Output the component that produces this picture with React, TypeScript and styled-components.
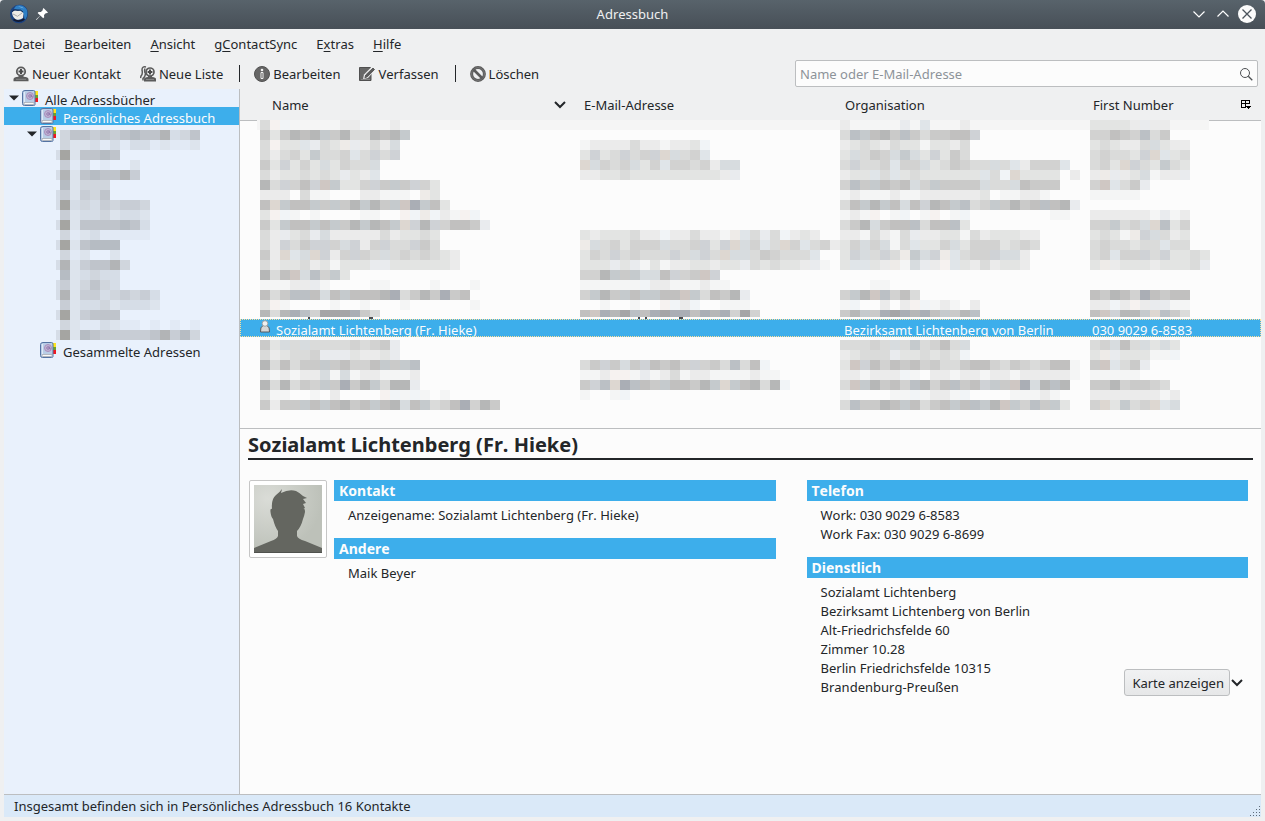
import React from "react";
import styled, { createGlobalStyle } from "styled-components";

const colors = {
  chrome: "#eff0f1",
  view: "#fcfcfc",
  text: "#232629",
  accent: "#3daeeb",
  line: "#bcbec0",
  tree: "#e9f1fc",
};

const GlobalStyle = createGlobalStyle`
  * { box-sizing: border-box; }
  body {
    margin: 0;
    background: ${colors.chrome};
    color: ${colors.text};
    font: 13px/18px "Noto Sans", "Open Sans", sans-serif;
    font-kerning: none;
  }
  button, input { font: inherit; font-kerning: none; color: inherit; }
  button { margin: 0; padding: 0; border: 0; background: none; }
  svg { display: block; flex: none; }
`;

const Window = styled.div`
  display: flex;
  flex-direction: column;
  min-height: 100vh;
  padding-bottom: 4px;
`;

const TitleBar = styled.header`
  display: grid;
  grid-template-columns: 1fr auto 1fr;
  align-items: center;
  height: 29px;
  padding: 0 9px 1px;
  border-radius: 4px 4px 0 0;
  background: linear-gradient(#58636b, #474f57);
  color: ${colors.chrome};
`;

const Title = styled.h1`
  margin: 0;
  font-size: 13px;
  font-weight: 400;
`;

const TitleGroup = styled.div<{ $end?: boolean; $gap: number }>`
  display: flex;
  align-items: center;
  justify-content: ${(p) => (p.$end ? "flex-end" : "flex-start")};
  gap: ${(p) => p.$gap}px;
`;

const WindowButton = styled.button`
  display: flex;
  justify-content: center;
  width: 18px;
`;

const MenuBar = styled.nav`
  display: flex;
  align-items: center;
  gap: 19px;
  height: 31px;
  padding: 0 13px 1px;
`;

const MenuItem = styled.button`
  u { text-underline-offset: 2px; }
`;

const ToolBar = styled.div`
  display: flex;
  align-items: center;
  height: 29px;
  padding: 0 7px 2px 13px;
`;

const Tool = styled.button`
  display: flex;
  align-items: center;
  gap: 3px;
  margin-right: 19px;
  white-space: nowrap;
`;

const Separator = styled.span`
  width: 1px;
  height: 17px;
  margin: 0 14px 0 -3px;
  background: ${colors.text};
`;

const Search = styled.label`
  display: flex;
  align-items: center;
  width: 463px;
  height: 27px;
  margin-left: auto;
  padding: 0 4px;
  border: 1px solid ${colors.line};
  border-radius: 2px;
  background: ${colors.view};
  input {
    flex: 1;
    min-width: 0;
    padding: 0;
    border: 0;
    outline: 0;
    background: none;
  }
  input::placeholder { color: #8d9399; opacity: 1; }
`;

const Body = styled.div`
  display: flex;
  flex: 1;
  margin: 0 4px;
`;

const Tree = styled.aside`
  width: 236px;
  flex: none;
  border-right: 1px solid ${colors.line};
  background: ${colors.tree};
`;

const TreeRow = styled.div<{ $level: number; $selected?: boolean }>`
  display: flex;
  align-items: flex-start;
  min-height: 18px;
  padding-left: ${(p) => 4 + p.$level * 18}px;
  background: ${(p) => (p.$selected ? colors.accent : "transparent")};
  color: ${(p) => (p.$selected ? colors.view : colors.text)};
`;

const Twisty = styled.span`
  display: flex;
  align-items: center;
  width: 14px;
  height: 18px;
  padding-left: 1px;
`;

const TreeLabel = styled.span`
  height: 18px;
  padding-left: 7px;
  line-height: 22px;
`;

const TreeMosaic = styled.div`
  padding: 5px 0 1px;
`;

const Main = styled.main`
  display: flex;
  flex-direction: column;
  flex: 1;
  min-width: 0;
  background: ${colors.view};
`;

const TablePane = styled.section`
  position: relative;
  border-bottom: 1px solid ${colors.line};
  &::before {
    content: "";
    position: absolute;
    top: 31px;
    left: 0;
    right: 0;
    border-top: 1px solid ${colors.line};
  }
  &::after {
    content: "";
    position: absolute;
    top: 31px;
    left: 17px;
    right: 52px;
    height: 10px;
    background: #f5f5f5;
  }
`;

const Table = styled.table`
  position: relative;
  z-index: 1;
  width: 100%;
  table-layout: fixed;
  border-collapse: collapse;
`;

const Col = styled.col<{ $width?: number }>`
  width: ${(p) => (p.$width ? p.$width + "px" : "auto")};
`;

const HeadCell = styled.th<{ $indent: number; $end?: number }>`
  height: 31px;
  padding: 0 ${(p) => p.$end ?? 0}px 0 ${(p) => p.$indent}px;
  background: ${colors.chrome};
  font-weight: 400;
  text-align: left;
`;

const HeadContent = styled.div`
  display: flex;
  align-items: center;
  justify-content: space-between;
`;

const MosaicCell = styled.td<{ $indent?: number; $height: number; $top?: number }>`
  height: ${(p) => p.$height}px;
  padding: ${(p) => p.$top ?? 0}px 0 0 ${(p) => p.$indent ?? 0}px;
  vertical-align: top;
`;

const SelectedRow = styled.tr`
  background: ${colors.accent};
  color: ${colors.view};
  outline: 1px dotted #ffdf98;
  outline-offset: -1px;
`;

const DataCell = styled.td<{ $indent: number }>`
  height: 18px;
  padding: 0 0 0 ${(p) => p.$indent}px;
`;

const CellText = styled.div`
  display: flex;
  align-items: flex-start;
  gap: 5px;
  height: 18px;
  line-height: 22px;
  white-space: nowrap;
`;

const Details = styled.section`
  padding: 0 8px;
`;

const ContactName = styled.h2`
  height: 31px;
  margin: 0 0 20px;
  border-bottom: 2px solid ${colors.text};
  font-size: 20px;
  line-height: 32px;
`;

const Card = styled.div`
  display: flex;
  align-items: flex-start;
  padding: 0 5px 0 1px;
`;

const Photo = styled.div`
  margin-right: 7px;
  padding: 4px;
  border: 1px solid #c6c6c6;
  border-radius: 2px;
  background: #fff;
`;

const Columns = styled.div`
  display: grid;
  flex: 1;
  grid-template-columns: 1fr 1fr;
  align-items: start;
  gap: 31px;
`;

const Block = styled.section`
  margin-bottom: 13px;
`;

const BlockTitle = styled.h3`
  height: 21px;
  margin: 0 0 5px;
  padding-left: 5px;
  background: ${colors.accent};
  color: ${colors.view};
  font-size: 14px;
  line-height: 21px;
`;

const BlockBody = styled.div`
  display: flex;
  align-items: flex-end;
  justify-content: space-between;
  padding: 0 5px 0 14px;
`;

const Lines = styled.div`
  line-height: 19px;
`;

const MapActions = styled.div`
  display: flex;
  align-items: center;
  gap: 1px;
  padding-bottom: 1px;
`;

const MapButton = styled.button`
  height: 27px;
  padding: 0 5px 0 7px;
  border: 1px solid ${colors.line};
  border-radius: 3px;
  background: linear-gradient(#f1f2f3, #e6e7e8);
  white-space: nowrap;
`;

const StatusBar = styled.footer`
  display: flex;
  align-items: center;
  justify-content: space-between;
  height: 23px;
  margin: 0 4px;
  padding-left: 10px;
  border-top: 1px solid ${colors.line};
  background: #dae9f8;
  svg { align-self: flex-end; }
`;

/* Pixelated entries: one letter per 10px block, light to dark;
   capitals are the cool tints, digits the warm ones. */
const greys: Record<string, string> = {
  a: "#f4f5f5", b: "#ebebeb", c: "#e3e4e3", d: "#dadbda", e: "#d2d2d1",
  f: "#cacac9", g: "#c1c0bf", h: "#b6b7b7", i: "#a5a5a6",
  A: "#f1f4f7", B: "#e9ebee", C: "#e0e5e9", D: "#d7dcdf", E: "#cfd2d6",
  F: "#c5cacd", G: "#bbc0c5", H: "#aaaeb5",
  "1": "#f6f2f0", "2": "#eeebe8", "3": "#ddd7d1", "4": "#cfc7c3",
};

const blues: Record<string, string> = {
  a: "#e2eaf5", b: "#dde4ed", c: "#d6dde7", d: "#d0d6dd", e: "#c8cdd5",
  f: "#bfc4cb", g: "#b6bcc3", h: "#b2b4b6", i: "#a5a5a2",
};

type MosaicProps = {
  rows: string[];
  height: number;
  palette?: Record<string, string>;
  left?: number;
  lastRow?: number;
  specks?: number[];
};

function Mosaic({ rows, height, palette = greys, left = 0, lastRow = 10, specks = [] }: MosaicProps) {
  const width = Math.max(...rows.map((r) => r.length)) * 10 - left;
  return (
    <svg width={width} height={height} viewBox={`${left} 0 ${width} ${height}`} shapeRendering="crispEdges" aria-hidden="true">
      {rows.map((row, y) =>
        [...row].map((c, x) =>
          palette[c] ? (
            <rect key={`${x}-${y}`} x={x * 10} y={y * 10} width="10" height={y === rows.length - 1 ? lastRow : 10} fill={palette[c]} />
          ) : null
        )
      )}
      {specks.map((x) => (
        <rect key={x} x={x} y="197" width="2" height="2" fill="#4b4d52" />
      ))}
    </svg>
  );
}

const nameTop = [
  "d1Aa...abbA..b", "fcfhghFfhddhghF", "d1ccCBdc2BbdbD", "dbdecFddeCdEdE", "fcEcecDceddD",
  "dbccdcdcBcbC", "hdEegE4FcceEfFfEec", "bbb.daa...bbaaa.2c", "g3FggFfFfhFhfF4HFgc", "c1Aa.a....aa..1A2Aba1A.",
  "fcFggFgFfhFhgF3EhEeggfB", "dbBcdBDbbbbbdbccdc", "dbEdfEEeDEbeEddEfd", "fb3CD3EbeEedDdededcb", "dbccdbcacccBBccccccb",
  "hdg4DGeFc", "aaabbBa....aa....a...a", "gdfGGgDgFggghHdfhfHfg", "c1a....a..a...a......a", "hdhHGeiiiHfd",
];
const nameBottom = [
  "fcDdDddddedefB", "dbcddeBBBcbbcB", "hdgdffFfgeegFfFG", "bababbDaDabbaaab", "hdhdfeFfHfhFdhhB",
  "caa..a.b....1AaAa.a", "fbffFgFghfgFghDgFdegHehf",
];
const mailTop = [
  "", "", "abbbbdbbabbcA", "cEcdEdeE3DdeC", "3DedeDceCeedebDD", "bbccdcccccccccbB", "", "", "", "", "",
  "cbcccdbbAbbdbba2CdBdAbcb", "2DdeceeeDddeEcE3DeCd3eCdeb", "cedEdedddEdDEd3DDdfedddC", "cccBcBacabbccbccBdcdccbBa",
  "eehFfFDDgEef4E", "aaaaaaAbbaaabaa", "eFhfFgFFgg4FdgfhB", "..a..a..1AbA..aaa", "g4HhiGgHiHHgHhHeie",
];
const mailBottom = ["", "", "dfEfDfEgfgeEefdGdgA", "aab11aBabdabbaaaabaa", "fEG3HGgfFggfhF3FghdhA", "a..aA"];
const orgTop = [
  "b.aaa.BaC...b", "dGFghfGfdffggE", "bcdcbdccaccbd", "cDdfeDFDcEcfd", "dEddeCeeDcdfeddDdCbeeeC", "bccCdCcdccccccCdA3cccc.b",
  "eGfFgfgDeFffffDddDgfff", "abaaabaabbbbbbc.aabba", "dgFhFgDgEhgFGdeFfhfgGghB", "aba1.aA.a1.aA........aa", "dfhDfggGdggGc", "bbadbadBbbccadbcccbb",
  "ceDeDadCcceDceeecded", "cEDdEd2FDE2CdeeEDDb", "cCCcb2aDBb1Ccbdbccb", "", "...aa", "eFh4Gegd", "aA..b.b1Aaba.b", "fhFfHiHhHgFfhG",
];
const orgBottom = [
  "dddedDdFdegdD", "bcdddBccdcdcA", "c4Egegfgefddfggedfedegga", "bbabbbAa.bbabbabbabbbbba", "d4FhfgeGhegGfgEFf4HDhGh",
  "a....aaAabbaA....aaaba", "dGffhgFgdfgFgGFh4FeGfFc",
];
const phoneTop = [
  "ccccbBbb", "eegfeGdf", "cdcbbdDcbb", "deddcE3Ccd", "dec3EdcFdc", "b2BbcDabbB", "e4CdfB", "aaaaa", "", "bbbbbbaBab",
  "eeFdeD3Gce", "cdca2EDdbc", "deddcddCdd", "deCeeEdEccdc", "c2bcccbcccdB", "", "", "gfhgeHgfgg", "bbAb1bBBaa", "g4EhhF3Gfd",
];
const phoneBottom = ["deDgdDcDc", "c2BcccaaA", "f4CdfB", "aaaaa", "ffheffed", "bbbbbbbab", "e3cFde3CD"];
const treeRows = [
  ".dffefefgffhcdf", ".dbbcacaccabaab", "cibffgf", ".eac.a..b", "chbfgffhe", ".gbddd", "cebedf", "cicdcedeed", ".ebccdbccb",
  "cibffffgfc", ".dabcaaaaa", "cibfggg", ".dab..b", "chbeffhd", ".gbcdcc", "cebdfdc", "chbeecdedec", ".ebccdbcccb", "cibefff",
  ".dbaacbaa.a.a.a", "cibgfeeeeefhegd",
];

const BookIcon = () => (
  <svg width="16" height="18" viewBox="0 0 16 18" aria-hidden="true">
    <rect x="12" y="2" width="4" height="4" fill="#ffe51c" />
    <rect x="12" y="6" width="4" height="3" fill="#6fa02c" />
    <rect x="12" y="9" width="4" height="4" fill="#f01820" />
    <path d="M3 1.500h8.500q1.500 0 1.500 1.500v12.500q0 1-1.500 1H2.500q-2 0-2-2V3.500q0-2 2.500-2z" fill="#b9cde6" stroke="#5473a3" />
    <path d="M2.500 3v10" stroke="#dfe9f7" />
    <path d="M2 13.500h10v2H3q-1.500 0-1-2z" fill="#fafafa" stroke="#a9adb4" strokeWidth=".8" />
    <circle cx="8" cy="7" r="3.500" fill="#bfb4d3" stroke="#a788b8" strokeWidth=".9" />
    <circle cx="8" cy="7" r="1.300" fill="none" stroke="#8b6ca6" strokeWidth=".8" />
    <path d="M9.300 5.500v2q.8 1.200 1.700 0" fill="none" stroke="#8b6ca6" strokeWidth=".8" />
  </svg>
);

const TwistyIcon = () => (
  <svg width="10" height="6" viewBox="0 0 10 6" aria-hidden="true"><path d="M0 .5h10L5 5.500z" fill="#232629" /></svg>
);

const ThunderbirdIcon = () => (
  <svg width="20" height="20" viewBox="0 0 20 20" aria-hidden="true">
    <path d="M10 .8c5-.8 9 3.200 9 8.700s-3.500 9.500-8 9.700C5 20 1 15 1 9q0-3 2-5 3-3.200 7-3.200z" fill="#1d4380" />
    <path d="M8 1.500q7-1.500 10 4.500 1.500 7-3 10.500 1-6-2-8.500-5-3-8-2 0-3 3-4.500z" fill="#2f7fc4" />
    <path d="M9 2.500q4-.5 6 2-3-1-6-2z" fill="#79b8e8" />
    <path d="M3 8.500Q5.500 5.500 9 7q4-1 5.500 2.500l-.5 4.500q-3 2.500-7 1.500-3.500-2-4-7z" fill="#eeebe7" />
    <path d="M4 10l4.500 2.300L13 9" fill="none" stroke="#9b9ca0" strokeWidth=".8" />
    <path d="M3 7.500q2-3 5-1.500 4-.8 6 2" fill="none" stroke="#14284e" />
    <path d="M4.500 15.500q5 3.500 11-.5" fill="none" stroke="#121a33" strokeWidth="1.800" />
  </svg>
);

const PinIcon = () => (
  <svg width="12" height="12" viewBox="0 0 12 12" aria-hidden="true">
    <path d="M7.500 0L12 4.500l-1.200.7-.8-.2-2 2 .2 2.200-1 1-2.800-2.700L.5 12 0 11.500l4.200-4L1.600 5l1-1 2.300.1 2-2-.2-.8z" fill="#fff" />
  </svg>
);

const AddContactIcon = () => (
  <svg width="16" height="16" viewBox="0 0 16 16" aria-hidden="true">
    <circle cx="8" cy="5.500" r="4.200" fill="#eff0f1" stroke="#5b5b5b" strokeWidth="1.800" />
    <path d="M5.500 9.300h5v1.500q5 .3 5 2.400v2H.5v-2q0-2.100 5-2.400z" fill="#5b5b5b" />
    <path d="M8 3v5M5.500 5.500h5" stroke="#4a4a4a" strokeWidth="2" />
    <path d="M3 13.300h10" stroke="#858585" />
  </svg>
);

const AddListIcon = () => (
  <svg width="16" height="16" viewBox="0 0 16 16" aria-hidden="true">
    <path d="M6 1Q2 0 2 4q1 4-1 6L.5 12M5 2.500q-1 3 .5 5-.5 4-2.500 5v2" fill="none" stroke="#5b5b5b" strokeWidth="1.500" />
    <circle cx="10" cy="6" r="4" fill="#eff0f1" stroke="#5b5b5b" strokeWidth="1.700" />
    <path d="M8 9.700h4V11q4 .3 4 2v2.500H4V13q0-1.700 4-2z" fill="#5b5b5b" />
    <path d="M10 3.600v4.800M7.600 6h4.800" stroke="#4a4a4a" strokeWidth="2" />
    <path d="M6 13.500h8" stroke="#858585" />
  </svg>
);

const InfoIcon = () => (
  <svg width="16" height="16" viewBox="0 0 16 16" aria-hidden="true">
    <circle cx="8" cy="8" r="7.500" fill="#666" stroke="#515151" />
    <circle cx="8" cy="4" r="1.300" fill="#f3f3f3" />
    <path d="M7 6.500h2v6H7z" fill="#555" stroke="#f3f3f3" />
  </svg>
);

const WriteIcon = () => (
  <svg width="16" height="16" viewBox="0 0 16 16" aria-hidden="true">
    <path d="M.5 1.500h11L12 8v6.500H.5z" fill="#676767" stroke="#505050" />
    <path d="M13.500 0L17 3l-8 9-5 1 1-4.500z" fill="#eff0f1" />
    <path d="M14 2l1.500 1.500-7 7.200-2.600 1 .8-2.700z" fill="#5b5b5b" stroke="#5b5b5b" />
    <path d="M2 13.500h9" stroke="#858585" />
  </svg>
);

const DeleteIcon = () => (
  <svg width="16" height="16" viewBox="0 0 16 16" aria-hidden="true">
    <circle cx="8" cy="8" r="6.400" fill="none" stroke="#5b5b5b" strokeWidth="3" />
    <circle cx="8" cy="8" r="6.400" fill="none" stroke="#777" />
    <path d="M3.500 3.500l9 9" stroke="#5b5b5b" strokeWidth="2.600" />
  </svg>
);

const SearchIcon = () => (
  <svg width="14" height="14" viewBox="0 0 14 14" fill="none" stroke="#4d5053" aria-hidden="true">
    <circle cx="6" cy="6" r="4.500" /><path d="M9.300 9.300l4 4" strokeWidth="1.300" />
  </svg>
);

const Chevron = ({ size = 12, up = false, thin = false }: { size?: number; up?: boolean; thin?: boolean }) => (
  <svg width={size} height="12" viewBox="0 0 12 12" fill="none" stroke={thin ? "#fff" : "#232629"} strokeWidth={thin ? 1.2 : 2} aria-hidden="true">
    <path d={up ? "M.5 8.500L6 3l5.500 5.500" : thin ? "M.5 3.500L6 9l5.500-5.500" : "M1 3l5 5 5-5"} />
  </svg>
);

const CloseIcon = () => (
  <svg width="18" height="18" viewBox="0 0 18 18" aria-hidden="true">
    <circle cx="9" cy="9" r="9" fill="#fcfcfc" /><path d="M4.500 4.500l9 9m0-9l-9 9" stroke="#4b545c" strokeWidth="1.300" />
  </svg>
);

const ColumnsIcon = () => (
  <svg width="11" height="11" viewBox="0 0 11 11" shapeRendering="crispEdges" aria-hidden="true">
    <path d="M5 8.500H1.500v-7h8V5M1 4.500h9M5.500 1v8" fill="none" stroke="#000" />
    <path d="M6 7h5L8.500 10z" fill="#000" />
  </svg>
);

const PersonIcon = () => (
  <svg width="12" height="14" viewBox="0 0 12 14" aria-hidden="true">
    <path d="M4 6.500h4q3 1.500 2.500 6.500h-9Q1 8 4 6.500z" fill="#d7d7d7" stroke="#555b60" />
    <circle cx="6" cy="4.500" r="2.800" fill="#f0f0f0" stroke="#a0a4a6" />
  </svg>
);

const GripIcon = () => (
  <svg width="12" height="12" viewBox="0 0 12 12" shapeRendering="crispEdges" fill="#5f6d7b" aria-hidden="true">
    {[0, 1, 2, 3].map((r) =>
      Array.from({ length: r + 1 }, (_, i) => <rect key={`${r}${i}`} x={10 - i * 3} y={1 + r * 3} width="1" height="1" />)
    )}
  </svg>
);

const Silhouette = () => (
  <svg width="68" height="68" viewBox="0 0 68 68" role="img" aria-label="Kontaktfoto">
    <defs>
      <radialGradient id="photo" cx=".2" cy=".2" r=".8">
        <stop offset="0" stopColor="#dadcd7" /><stop offset="1" stopColor="#bdc1b9" />
      </radialGradient>
    </defs>
    <rect width="68" height="68" fill="url(#photo)" />
    <path d="M0 68V63L17 56Q23 54 24 51V46Q21 42 19 34Q17 32 16.500 27Q16 23 18 24Q17 14 22 10Q26 7 28 4L27 8Q35 4 42 6Q46 8 49 11L53 13L49 14L52 18L49 19L51 23L49 24Q51 23 51 27Q50 32 49 34Q47 42 43 46V51Q44 54 51 56L68 63V68z" fill="#646660" />
    <path d="M0 67.500h68" stroke="#50524e" />
  </svg>
);

const menus: [string, string, string][] = [
  ["", "D", "atei"], ["", "B", "earbeiten"], ["", "A", "nsicht"], ["g", "C", "ontactSync"], ["E", "x", "tras"], ["", "H", "ilfe"],
];

function DetailBlock({ title, lines, children }: { title: string; lines: string[]; children?: React.ReactNode }) {
  return (
    <Block>
      <BlockTitle>{title}</BlockTitle>
      <BlockBody>
        <Lines>{lines.map((l) => <div key={l}>{l}</div>)}</Lines>
        {children}
      </BlockBody>
    </Block>
  );
}

export default function App() {
  return (
    <>
      <GlobalStyle />
      <Window>
        <TitleBar>
          <TitleGroup $gap={7}><ThunderbirdIcon /><PinIcon /></TitleGroup>
          <Title>Adressbuch</Title>
          <TitleGroup $end $gap={6}>
            <WindowButton aria-label="Minimieren"><Chevron thin /></WindowButton>
            <WindowButton aria-label="Maximieren"><Chevron thin up /></WindowButton>
            <WindowButton aria-label="Schließen"><CloseIcon /></WindowButton>
          </TitleGroup>
        </TitleBar>
        <MenuBar>
          {menus.map(([before, key, after]) => (
            <MenuItem key={after}>{before}<u>{key}</u>{after}</MenuItem>
          ))}
        </MenuBar>
        <ToolBar>
          <Tool><AddContactIcon />Neuer Kontakt</Tool>
          <Tool><AddListIcon />Neue Liste</Tool>
          <Separator />
          <Tool><InfoIcon />Bearbeiten</Tool>
          <Tool><WriteIcon />Verfassen</Tool>
          <Separator />
          <Tool><DeleteIcon />Löschen</Tool>
          <Search>
            <input type="text" placeholder="Name oder E-Mail-Adresse" aria-label="Name oder E-Mail-Adresse" />
            <SearchIcon />
          </Search>
        </ToolBar>
        <Body>
          <Tree>
            <TreeRow $level={0}><Twisty><TwistyIcon /></Twisty><BookIcon /><TreeLabel>Alle Adressbücher</TreeLabel></TreeRow>
            <TreeRow $level={1} $selected><Twisty /><BookIcon /><TreeLabel>Persönliches Adressbuch</TreeLabel></TreeRow>
            <TreeRow $level={1}>
              <Twisty><TwistyIcon /></Twisty>
              <BookIcon />
              <TreeMosaic><Mosaic rows={treeRows} height={210} palette={blues} left={6} /></TreeMosaic>
            </TreeRow>
            <TreeRow $level={1}><Twisty /><BookIcon /><TreeLabel>Gesammelte Adressen</TreeLabel></TreeRow>
          </Tree>
          <Main>
            <TablePane>
              <Table>
                <colgroup><Col /><Col $width={260} /><Col $width={250} /><Col $width={171} /></colgroup>
                <thead>
                  <tr>
                    <HeadCell $indent={32} $end={14}><HeadContent>Name<Chevron /></HeadContent></HeadCell>
                    <HeadCell $indent={4}>E-Mail-Adresse</HeadCell>
                    <HeadCell $indent={5}>Organisation</HeadCell>
                    <HeadCell $indent={3} $end={10}>
                      <HeadContent>First Number<button aria-label="Spalten auswählen"><ColumnsIcon /></button></HeadContent>
                    </HeadCell>
                  </tr>
                </thead>
                <tbody>
                  <tr>
                    <MosaicCell $height={199} $indent={20}><Mosaic rows={nameTop} height={199} lastRow={7} specks={[48, 109, 111]} /></MosaicCell>
                    <MosaicCell $height={199}><Mosaic rows={mailTop} height={199} lastRow={7} specks={[58, 65, 99, 101]} /></MosaicCell>
                    <MosaicCell $height={199}><Mosaic rows={orgTop} height={199} lastRow={7} /></MosaicCell>
                    <MosaicCell $height={199}><Mosaic rows={phoneTop} height={199} lastRow={7} /></MosaicCell>
                  </tr>
                  <SelectedRow>
                    <DataCell $indent={19}><CellText><PersonIcon />Sozialamt Lichtenberg (Fr. Hieke)</CellText></DataCell>
                    <DataCell $indent={4} />
                    <DataCell $indent={4}><CellText>Bezirksamt Lichtenberg von Berlin</CellText></DataCell>
                    <DataCell $indent={2}><CellText>030 9029 6-8583</CellText></DataCell>
                  </SelectedRow>
                  <tr>
                    <MosaicCell $height={91} $top={3} $indent={20}><Mosaic rows={nameBottom} height={70} /></MosaicCell>
                    <MosaicCell $height={91} $top={3}><Mosaic rows={mailBottom} height={70} /></MosaicCell>
                    <MosaicCell $height={91} $top={3}><Mosaic rows={orgBottom} height={70} /></MosaicCell>
                    <MosaicCell $height={91} $top={3}><Mosaic rows={phoneBottom} height={70} /></MosaicCell>
                  </tr>
                </tbody>
              </Table>
            </TablePane>
            <Details>
              <ContactName>Sozialamt Lichtenberg (Fr. Hieke)</ContactName>
              <Card>
                <Photo><Silhouette /></Photo>
                <Columns>
                  <div>
                    <DetailBlock title="Kontakt" lines={["Anzeigename: Sozialamt Lichtenberg (Fr. Hieke)"]} />
                    <DetailBlock title="Andere" lines={["Maik Beyer"]} />
                  </div>
                  <div>
                    <DetailBlock title="Telefon" lines={["Work: 030 9029 6-8583", "Work Fax: 030 9029 6-8699"]} />
                    <DetailBlock
                      title="Dienstlich"
                      lines={[
                        "Sozialamt Lichtenberg", "Bezirksamt Lichtenberg von Berlin", "Alt-Friedrichsfelde 60",
                        "Zimmer 10.28", "Berlin Friedrichsfelde 10315", "Brandenburg-Preußen",
                      ]}
                    >
                      <MapActions>
                        <MapButton>Karte anzeigen</MapButton>
                        <button aria-label="Kartendienst wählen"><Chevron /></button>
                      </MapActions>
                    </DetailBlock>
                  </div>
                </Columns>
              </Card>
            </Details>
          </Main>
        </Body>
        <StatusBar>Insgesamt befinden sich in Persönliches Adressbuch 16 Kontakte<GripIcon /></StatusBar>
      </Window>
    </>
  );
}
